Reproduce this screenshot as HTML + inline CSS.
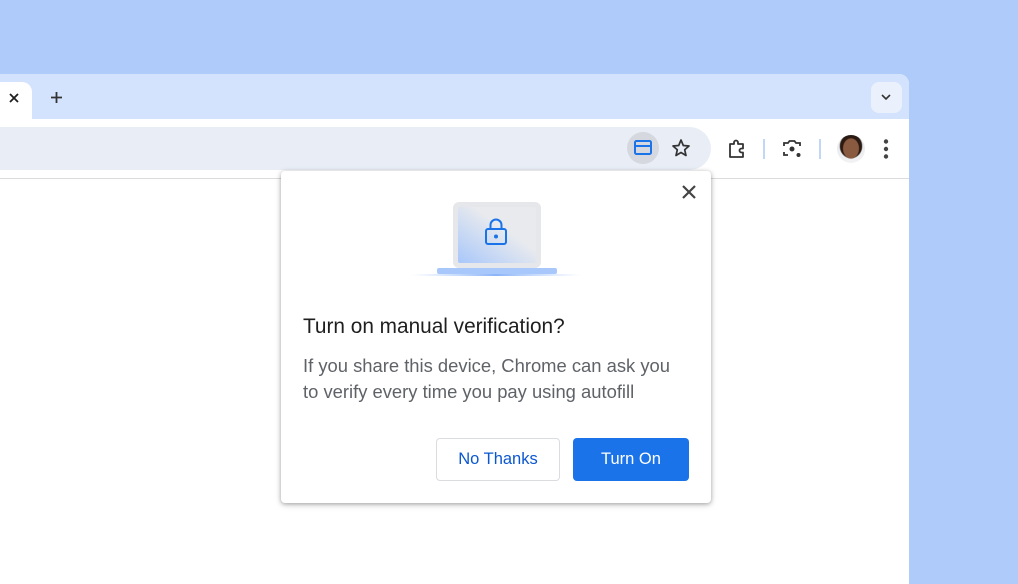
<!DOCTYPE html>
<html><head><style>
body{margin:0;width:1018px;height:573px;background:#afcbf9;position:relative;overflow:hidden;font-family:"Liberation Sans",sans-serif}
.win{position:absolute;left:0;top:74px;width:909px;height:510px;background:#fff;border-top-right-radius:10px;overflow:hidden}
.strip{position:absolute;left:0;top:0;width:909px;height:45px;background:#d3e3fd}
.tab{position:absolute;left:0;top:8px;width:32px;height:37px;background:#fff;border-top-right-radius:10px}
.omni{position:absolute;left:0;top:53px;width:711px;height:43px;background:#e9eef6;border-radius:0 22px 22px 0}
.line{position:absolute;left:0;top:104px;width:909px;height:1px;background:#dadce0}
.dlg{position:absolute;left:281px;top:171px;width:430px;height:332px;background:#fff;border-radius:4px;box-shadow:0 1px 4px rgba(0,0,0,.3),0 2px 8px rgba(0,0,0,.12)}
.t{position:absolute;left:22px;top:144px;font-size:20.8px;color:#1f1f1f}
.b{position:absolute;left:22px;top:182px;font-size:18.4px;line-height:26px;color:#5f6368;white-space:nowrap}
.btn{position:absolute;top:267px;height:43px;border-radius:4px;font-size:16.5px;display:flex;align-items:center;justify-content:center;box-sizing:border-box}
</style></head><body>
<div class="win">
<div class="strip"></div>
<div class="tab"></div>
<svg style="position:absolute;left:9px;top:19px" width="10" height="10"><path d="M1 1L9 9M9 1L1 9" stroke="#1f1f1f" stroke-width="1.8"/></svg>
<svg style="position:absolute;left:51px;top:18px" width="11" height="11"><path d="M5.5 0V11M0 5.5H11" stroke="#333" stroke-width="1.8"/></svg>
<div style="position:absolute;left:871px;top:8px;width:31px;height:31px;background:#ebf1fc;border-radius:8px"></div>
<svg style="position:absolute;left:881px;top:20px" width="10" height="7"><path d="M1 1L5 5L9 1" stroke="#333" stroke-width="1.6" fill="none"/></svg>
<div class="omni"></div>
<div style="position:absolute;left:627px;top:58px;width:32px;height:32px;border-radius:50%;background:#d5d8de"></div>
<svg style="position:absolute;left:634px;top:66px" width="18" height="16"><rect x="1" y="1" width="16" height="13" rx="1.5" fill="none" stroke="#1a73e8" stroke-width="2"/><rect x="1" y="5" width="16" height="2" fill="#1a73e8"/></svg>
<svg style="position:absolute;left:671px;top:64px" width="20" height="20"><path d="M10 2L12.3 7.5L18 8L13.7 11.8L15 17.5L10 14.5L5 17.5L6.3 11.8L2 8L7.7 7.5Z" fill="none" stroke="#333" stroke-width="1.7" stroke-linejoin="round"/></svg>
<svg style="position:absolute;left:727px;top:64px" width="22" height="22"><path d="M3 6H7V4.5A2 2 0 0 1 11 4.5V6H16V10.5H14.5A2 2 0 0 0 14.5 14.5H16V19H3Z" fill="none" stroke="#333" stroke-width="1.8" stroke-linejoin="round"/></svg>
<div style="position:absolute;left:763px;top:65px;width:2px;height:20px;background:#c2d7f8"></div>
<svg style="position:absolute;left:781px;top:64px" width="22" height="22"><path d="M3 8V5H7L8.5 3H13.5L15 5H19V8M3 14V17H7M19 14" fill="none" stroke="#333" stroke-width="1.8"/><circle cx="11" cy="11" r="2.5" fill="#333"/><circle cx="17.5" cy="17" r="2" fill="#333"/></svg>
<div style="position:absolute;left:819px;top:65px;width:2px;height:20px;background:#c2d7f8"></div>
<div style="position:absolute;left:837px;top:61px;width:28px;height:28px;border-radius:50%;background:radial-gradient(ellipse 30% 38% at 50% 48%,#8a5a40 0 90%,transparent 100%),radial-gradient(ellipse 42% 45% at 50% 40%,#2a1a12 0 90%,transparent 100%),linear-gradient(#e4e6ea,#f2f2f4)"></div>
<svg style="position:absolute;left:882px;top:64px" width="8" height="22"><circle cx="4" cy="3.5" r="2.2" fill="#444"/><circle cx="4" cy="11" r="2.2" fill="#444"/><circle cx="4" cy="18.5" r="2.2" fill="#444"/></svg>
<div class="line"></div>
</div>
<div class="dlg">
<svg style="position:absolute;left:400px;top:13px" width="16" height="16"><path d="M2 2L14 14M14 2L2 14" stroke="#444" stroke-width="2.2"/></svg>
<svg style="position:absolute;left:130px;top:28px" width="170" height="82" viewBox="0 0 170 82">
<defs><linearGradient id="g" x1="0" y1="1" x2="0.6" y2="0.4"><stop offset="0" stop-color="#a8c7fa"/><stop offset="1" stop-color="#e8eaee"/></linearGradient>
<linearGradient id="s" x1="0" x2="1"><stop offset="0" stop-color="#a8c7fa" stop-opacity="0"/><stop offset=".5" stop-color="#8ab4f8"/><stop offset="1" stop-color="#a8c7fa" stop-opacity="0"/></linearGradient></defs>
<rect x="42" y="3" width="88" height="66" rx="6" fill="#e5e7eb"/>
<rect x="47" y="8" width="78" height="56" rx="2" fill="url(#g)"/>
<rect x="26" y="69" width="120" height="6" rx="2" fill="#a8c7fa"/>
<rect x="0" y="75" width="170" height="2" fill="url(#s)"/>
<path d="M79.5 30V26a5.5 5.5 0 0 1 11 0V30" fill="none" stroke="#1a73e8" stroke-width="2"/>
<rect x="75" y="30" width="20" height="15" rx="2" fill="none" stroke="#1a73e8" stroke-width="2"/>
<circle cx="85" cy="37.5" r="2" fill="#1a73e8"/>
</svg>
<div class="t">Turn on manual verification?</div>
<div class="b">If you share this device, Chrome can ask you<br>to verify every time you pay using autofill</div>
<div class="btn" style="left:155px;width:124px;border:1px solid #dadce0;color:#0b57d0">No Thanks</div>
<div class="btn" style="left:292px;width:116px;background:#1a73e8;color:#fff">Turn On</div>
</div>
</body></html>
